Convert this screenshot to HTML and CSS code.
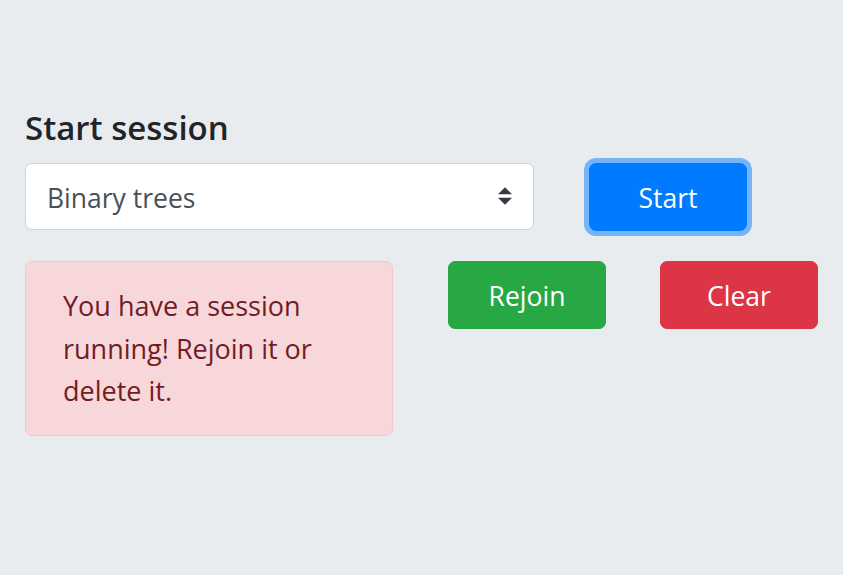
FILE: index.html
```html
<!DOCTYPE html>
<html lang="en">
<head>
<meta charset="utf-8">
<title>Start session</title>
<link rel="stylesheet" href="styles.css">
</head>
<body>
<main class="page">
  <h5 class="title">Start session</h5>
  <div class="row row-top">
    <div class="select-wrap">
      <select class="custom-select">
        <option>Binary trees</option>
      </select>
      <svg class="select-arrow" viewBox="0 0 4 5" width="14" height="18" aria-hidden="true"><path fill="#343a40" d="M2 0L0 2h4zm0 5L0 3h4z"/></svg>
    </div>
    <button class="btn btn-primary focused">Start</button>
  </div>
  <div class="row row-bottom">
    <div class="alert">You have a session running! Rejoin it or delete it.</div>
    <button class="btn btn-success">Rejoin</button>
    <button class="btn btn-danger">Clear</button>
  </div>
</main>
</body>
</html>
```
FILE: styles.css
```css
html, body {
  margin: 0;
  padding: 0;
  background: #e9ecef;
}
body {
  font-family: "Open Sans", "Noto Sans", sans-serif;
  color: #212529;
  width: 843px;
  height: 575px;
  overflow: hidden;
}
.page {
  padding: 107px 0 0 25px;
}
.title {
  margin: 0 0 14px 0;
  font-size: 33px;
  line-height: 42px;
  font-weight: 600;
  color: #212529;
}
.row {
  display: flex;
  align-items: flex-start;
}
.row-top {
  gap: 55px;
}
.row-bottom {
  margin-top: 30px;
}
.select-wrap {
  position: relative;
  width: 509px;
}
.custom-select {
  display: block;
  width: 509px;
  height: 67px;
  box-sizing: border-box;
  -webkit-appearance: none;
  appearance: none;
  background: #fff;
  border: 1px solid #ced4da;
  border-radius: 7px;
  padding: 3px 56px 0 21px;
  font-family: inherit;
  font-size: 26.5px;
  color: #495057;
  outline: none;
}
.select-arrow {
  position: absolute;
  right: 22px;
  top: 24px;
  pointer-events: none;
}
.btn {
  width: 158px;
  height: 68px;
  box-sizing: border-box;
  border: 1px solid transparent;
  border-radius: 7px;
  font-family: inherit;
  font-size: 26.5px;
  color: #fff;
  padding: 2px 0 0 0;
  text-align: center;
  cursor: pointer;
}
.btn-primary {
  background: #007bff;
  border-color: #007bff;
}
.focused {
  box-shadow: 0 0 0 5px rgba(0, 123, 255, 0.5);
}
.btn-success {
  background: #28a745;
  border-color: #28a745;
  margin-left: 55px;
}
.btn-danger {
  background: #dc3545;
  border-color: #dc3545;
  margin-left: 54px;
}
.alert {
  width: 368px;
  box-sizing: border-box;
  padding: 23px 35px 22px 37px;
  background: #f8d7da;
  border: 1px solid #f5c6cb;
  border-radius: 7px;
  color: #721c24;
  font-size: 27px;
  line-height: 42.5px;
}
```
